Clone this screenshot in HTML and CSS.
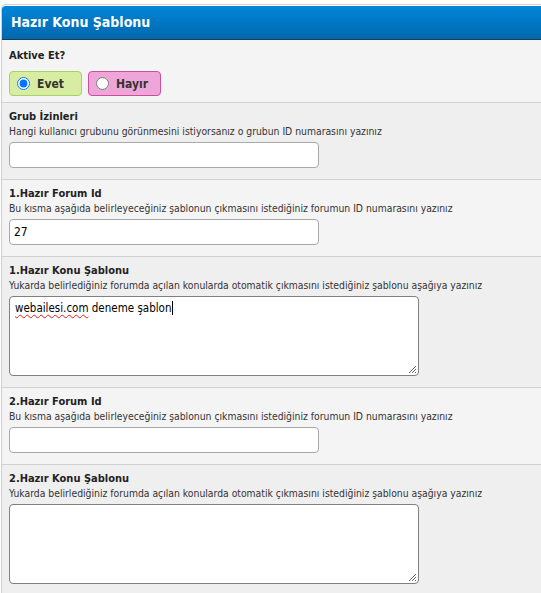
FILE: index.html
```
<!DOCTYPE html>
<html lang="tr">

<head>
    <meta charset="UTF-8">
    <meta name="viewport" content="width=device-width, initial-scale=1.0">
    <title>Hazır Konu Şablonu</title>
    <link rel="stylesheet" href="styles.css">
</head>

<body>
    <div class="panel">
        <div class="panel-head">Hazır Konu Şablonu</div>

        <div class="row row-first">
            <div class="row-title">Aktive Et?</div>
            <div class="choice-bar">
                <label class="choice choice-yes"><input type="radio" name="aktif" checked> Evet</label>
                <label class="choice choice-no"><input type="radio" name="aktif"> Hayır</label>
            </div>
        </div>

        <div class="row">
            <div class="row-title">Grub İzinleri</div>
            <div class="row-desc">Hangi kullanıcı grubunu görünmesini istiyorsanız o grubun ID numarasını yazınız</div>
            <input type="text" class="field">
        </div>

        <div class="row">
            <div class="row-title">1.Hazır Forum Id</div>
            <div class="row-desc">Bu kısma aşağıda belirleyeceğiniz şablonun çıkmasını istediğiniz forumun ID numarasını yazınız</div>
            <input type="text" class="field" value="27">
        </div>

        <div class="row">
            <div class="row-title">1.Hazır Konu Şablonu</div>
            <div class="row-desc">Yukarda belirlediğiniz forumda açılan konularda otomatik çıkmasını istediğiniz şablonu aşağıya yazınız</div>
            <div class="area"><span class="typo">webailesi.com</span> deneme şablon<span class="caret"></span>
                <svg class="grip" width="9" height="9" viewBox="0 0 9 9"><path d="M8 1L1 8M8 4L4 8M8 7L7 8" stroke="#666" stroke-width="1"/></svg>
            </div>
        </div>

        <div class="row">
            <div class="row-title">2.Hazır Forum Id</div>
            <div class="row-desc">Bu kısma aşağıda belirleyeceğiniz şablonun çıkmasını istediğiniz forumun ID numarasını yazınız</div>
            <input type="text" class="field">
        </div>

        <div class="row">
            <div class="row-title">2.Hazır Konu Şablonu</div>
            <div class="row-desc">Yukarda belirlediğiniz forumda açılan konularda otomatik çıkmasını istediğiniz şablonu aşağıya yazınız</div>
            <div class="area">
                <svg class="grip" width="9" height="9" viewBox="0 0 9 9"><path d="M8 1L1 8M8 4L4 8M8 7L7 8" stroke="#666" stroke-width="1"/></svg>
            </div>
        </div>
    </div>
</body>

</html>
```

FILE: styles.css
```
body, html {
    margin: 0;
    padding: 0;
    background: #fff;
    font-family: 'DejaVu Sans Condensed', 'DejaVu Sans', sans-serif;
    color: #333;
    overflow: hidden;
}

.panel {
    margin: 4px 0 0 1px;
    border: 1px solid #cfcfcf;
    border-right: none;
    border-radius: 5px 0 0 0;
}

.panel-head {
    height: 33px;
    line-height: 33px;
    padding-left: 9px;
    border-top: 1px solid #fff;
    border-radius: 4px 0 0 0;
    background: linear-gradient(#0086d9, #0068ad);
    border-bottom: 1px solid #1c3b4c;
    color: #fff;
    font-size: 14px;
    font-weight: bold;
}

.row {
    padding: 6px 7px 11px 7px;
    background: #f4f4f4;
    border-top: 1px solid #d2d2d2;
}

.row:nth-child(odd) {
    background: #efefef;
}

.row-first {
    border-top: none;
    padding-bottom: 6px;
}

.row-title {
    font-size: 11px;
    font-weight: bold;
    line-height: 15px;
    color: #222;
}

.row-first .row-title {
    margin-top: 2px;
    margin-bottom: 8px;
}

.row-desc {
    font-size: 10.3px;
    line-height: 14px;
    color: #333;
    margin-bottom: 4px;
    white-space: nowrap;
}

.choice-bar {
    display: flex;
    gap: 6px;
}

.choice {
    display: flex;
    align-items: center;
    gap: 7px;
    width: 66px;
    height: 23px;
    padding-left: 5px;
    box-sizing: content-box;
    border-radius: 4px;
    font-size: 12px;
    font-weight: bold;
    color: #333;
}

.choice input {
    margin: 0 0 0 2px;
    width: 13px;
    height: 13px;
}

.choice-yes {
    background: #d8eda2;
    border: 1px solid #a6d26a;
}

.choice-no {
    background: #eea6d8;
    border: 1px solid #cc4f9e;
}

.field {
    display: block;
    box-sizing: border-box;
    width: 310px;
    height: 26px;
    margin: 0;
    padding: 0 4px;
    border: 1px solid #a9a9a9;
    border-radius: 4px;
    background: #fff;
    font-family: 'DejaVu Sans Condensed', 'DejaVu Sans', sans-serif;
    font-size: 12px;
    color: #000;
}

.area {
    position: relative;
    box-sizing: border-box;
    width: 410px;
    height: 80px;
    padding: 4px 5px;
    border: 1px solid #808080;
    border-radius: 4px;
    background: #fff;
    font-size: 11.5px;
    line-height: 15px;
    color: #000;
}

.typo {
    text-decoration: underline wavy #e02020;
    text-decoration-thickness: 1px;
    text-underline-offset: 2px;
}

.caret {
    display: inline-block;
    width: 1px;
    height: 14px;
    margin-left: 1px;
    background: #000;
    vertical-align: -3px;
}

.grip {
    position: absolute;
    right: 1px;
    bottom: 1px;
}
```
